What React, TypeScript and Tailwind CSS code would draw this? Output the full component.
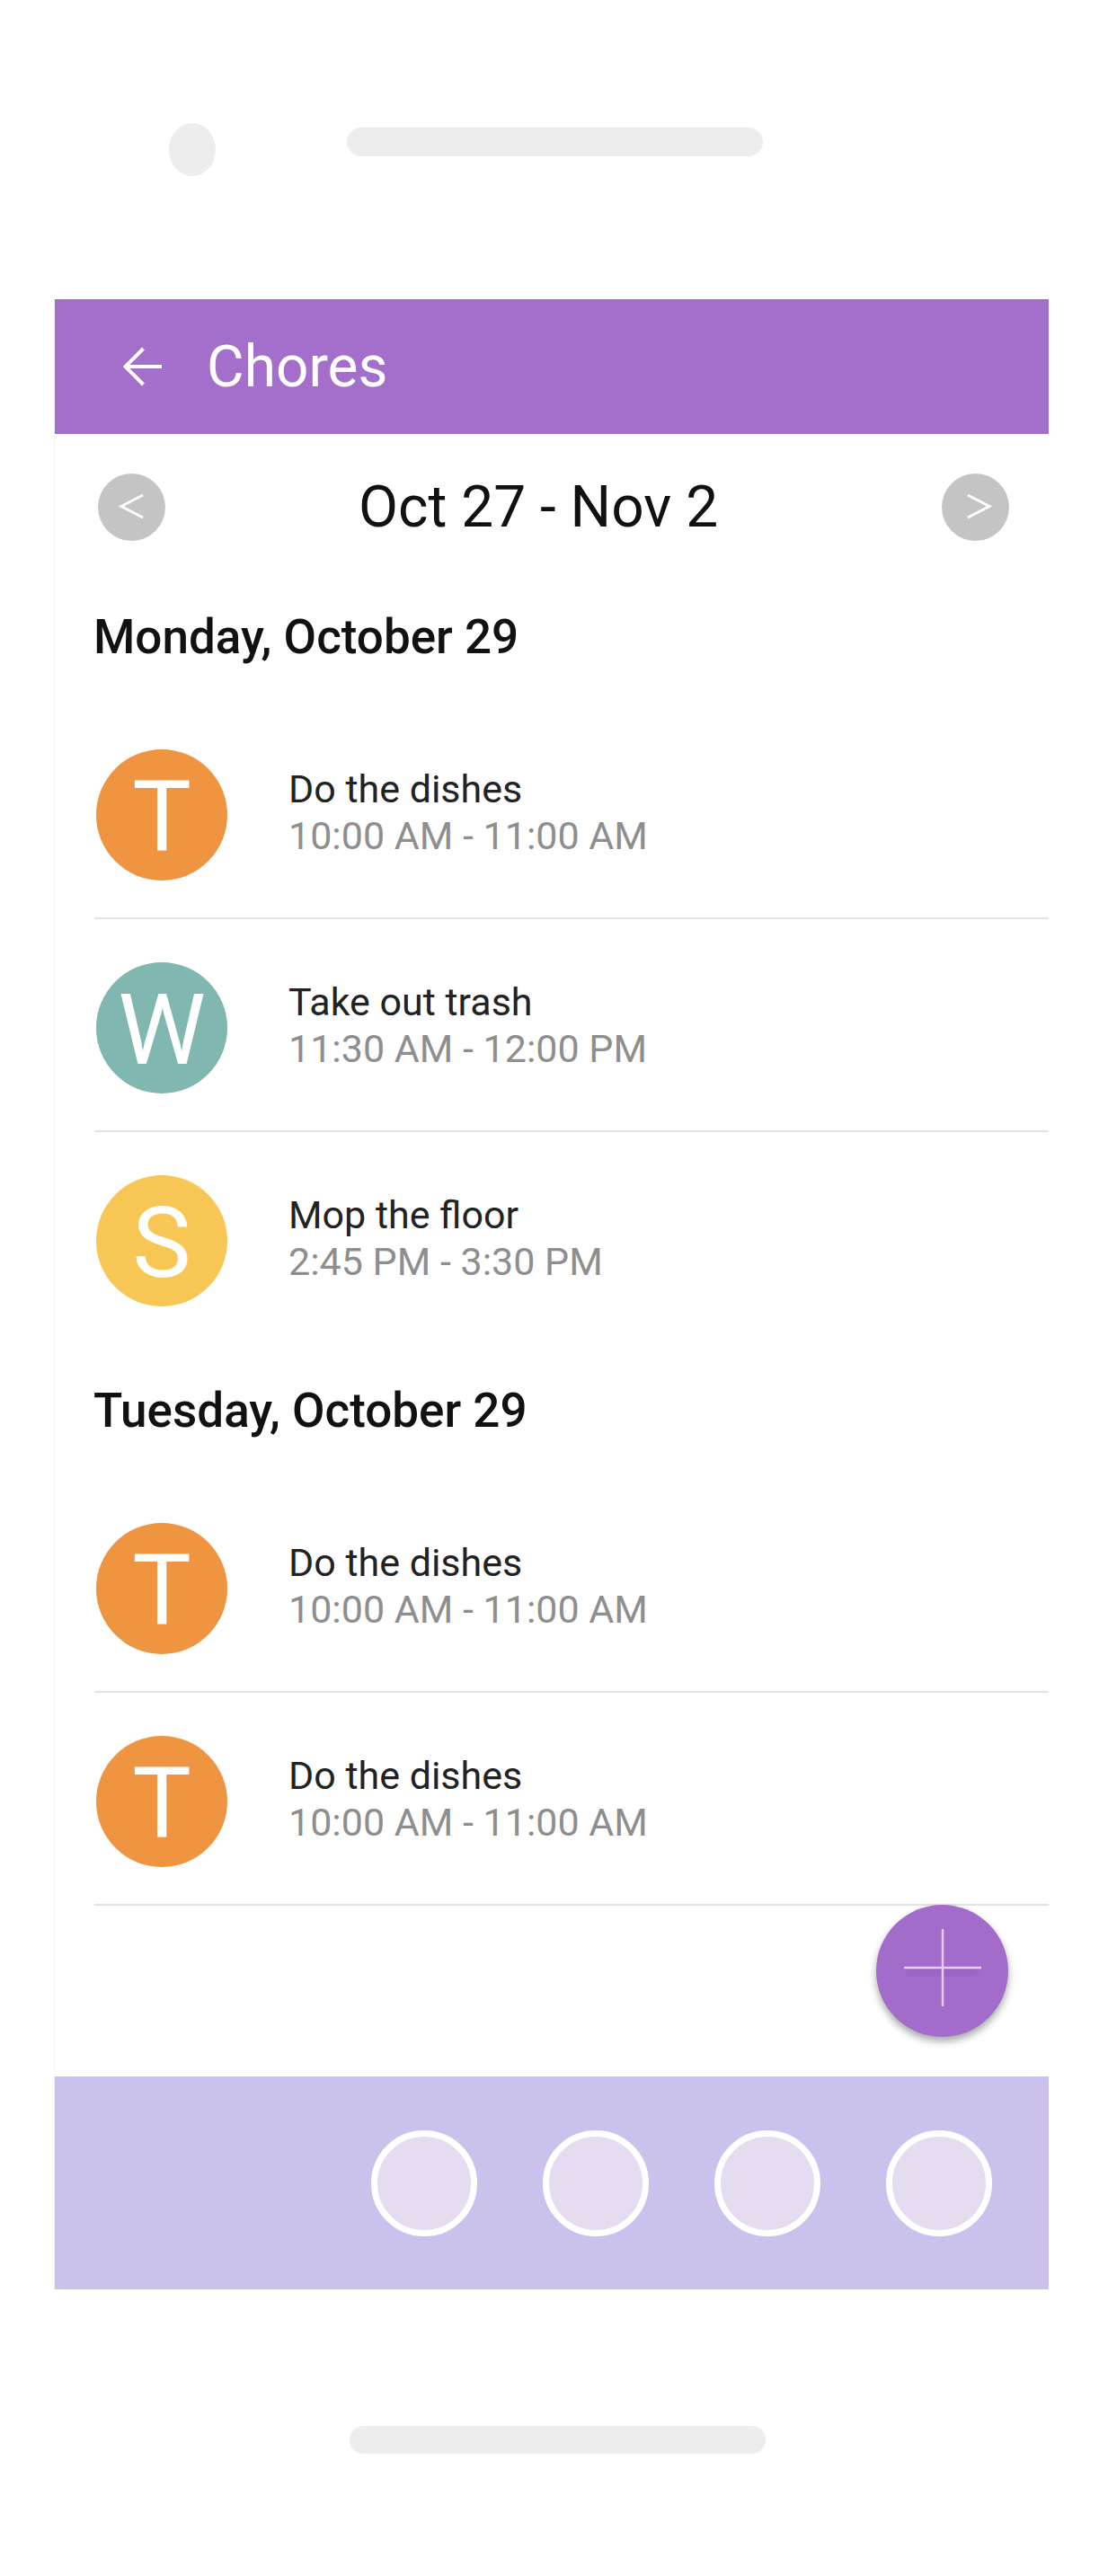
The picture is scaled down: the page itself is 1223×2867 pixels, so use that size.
import React from 'react';

type Chore = {
  letter: string;
  color: string;
  title: string;
  time: string;
  divider: boolean;
};

const days: { label: string; chores: Chore[] }[] = [
  {
    label: 'Monday, October 29',
    chores: [
      { letter: 'T', color: 'bg-[#ef9441]', title: 'Do the dishes', time: '10:00 AM - 11:00 AM', divider: true },
      { letter: 'W', color: 'bg-[#80b7b0]', title: 'Take out trash', time: '11:30 AM - 12:00 PM', divider: true },
      { letter: 'S', color: 'bg-[#f8c655]', title: 'Mop the floor', time: '2:45 PM - 3:30 PM', divider: false },
    ],
  },
  {
    label: 'Tuesday, October 29',
    chores: [
      { letter: 'T', color: 'bg-[#ef9441]', title: 'Do the dishes', time: '10:00 AM - 11:00 AM', divider: true },
      { letter: 'T', color: 'bg-[#ef9441]', title: 'Do the dishes', time: '10:00 AM - 11:00 AM', divider: true },
    ],
  },
];

const NavCircle = ({ dir }: { dir: 'prev' | 'next' }) => (
  <button
    aria-label={dir === 'prev' ? 'Previous week' : 'Next week'}
    className="w-[75px] h-[75px] rounded-full bg-[#c4c4c4] shrink-0 flex items-center justify-center"
  >
    <svg width="75" height="75" viewBox="0 0 75 75" fill="none">
      <polyline
        points={dir === 'prev' ? '50,24 26,36.5 50,49' : '29,24 53,36.5 29,49'}
        stroke="white"
        strokeWidth="3"
        strokeLinejoin="miter"
      />
    </svg>
  </button>
);

const ChoreRow = ({ chore }: { chore: Chore }) => (
  <div
    className={`flex items-center ml-[44px] pl-[2px] pt-[48px] pb-[41px] ${
      chore.divider ? 'border-b-2 border-[#e3e3e3]' : ''
    }`}
  >
    <div
      className={`w-[146px] h-[146px] rounded-full ${chore.color} flex items-center justify-center text-white text-[110px] leading-none shrink-0`}
    >
      <span className="pt-[6px]">{chore.letter}</span>
    </div>
    <div className="ml-[68px] pb-[7px]">
      <p className="text-[43px] leading-[52px] text-[#222222]">{chore.title}</p>
      <p className="text-[43px] leading-[52px] text-[#8e8e8e]">{chore.time}</p>
    </div>
  </div>
);

export default function App() {
  return (
    <div className="min-h-[2867px] bg-white font-['Roboto',sans-serif]">
      {/* phone top: camera + speaker */}
      <div className="h-[333px] flex items-start">
        <div className="ml-[188px] mt-[137px] w-[52px] h-[59px] rounded-[50%] bg-[#ededed]" />
        <div className="ml-[146px] mt-[142px] w-[463px] h-[32px] rounded-full bg-[#ededed]" />
      </div>

      <div className="ml-[61px] w-[1106px] shadow-[-1px_0_0_#f2f2f2]">
        {/* app bar */}
        <header className="h-[150px] bg-[#a36fcb] flex items-center pl-[76px]">
          <svg width="44" height="44" viewBox="0 0 44 44" fill="none">
            <path d="M43 22H3M22.5 2L2.5 22L22.5 42" stroke="white" strokeWidth="4" />
          </svg>
          <h1 className="ml-[49px] text-[64px] leading-[75px] text-white">Chores</h1>
        </header>

        {/* week switcher */}
        <div className="mt-[44px] flex items-center pl-[48px] pr-[44px]">
          <NavCircle dir="prev" />
          <p className="flex-1 text-center pr-[34px] text-[64px] leading-[75px] text-[#111111]">
            Oct 27 - Nov 2
          </p>
          <NavCircle dir="next" />
        </div>

        {days.map((day, i) => (
          <section key={day.label}>
            <h2
              className={`${i === 0 ? 'mt-[77px]' : 'mt-[45px]'} mb-[47px] ml-[43px] text-[53px] leading-[60px] font-medium text-[#111111]`}
            >
              {day.label}
            </h2>
            {day.chores.map((chore, j) => (
              <ChoreRow key={j} chore={chore} />
            ))}
          </section>
        ))}

        {/* add button */}
        <div className="flex justify-end pr-[45px]">
          <button
            aria-label="Add chore"
            className="-mt-[1px] mb-[44px] w-[147px] h-[147px] rounded-full bg-[#a36ccb] shadow-[0_5px_8px_rgba(0,0,0,0.35)] flex items-center justify-center"
          >
            <svg width="90" height="96" viewBox="0 0 90 96" fill="none">
              <defs>
                <filter id="plusShadow" x="-20%" y="-20%" width="140%" height="160%">
                  <feGaussianBlur stdDeviation="3" />
                </filter>
              </defs>
              <rect x="6" y="46" width="78" height="6" fill="#7a4aa0" opacity="0.35" filter="url(#plusShadow)" />
              <line x1="2" y1="44" x2="88" y2="44" stroke="#e4cdf1" strokeWidth="2.5" />
              <line x1="45" y1="1" x2="45" y2="87" stroke="#e4cdf1" strokeWidth="2.5" />
            </svg>
          </button>
        </div>

        {/* bottom nav */}
        <nav className="h-[237px] bg-[#cac2ec] flex items-center justify-end gap-[73px] pr-[63px]">
          {[0, 1, 2, 3].map(n => (
            <div
              key={n}
              className="w-[118px] h-[118px] rounded-full border-[7px] border-white bg-[#e6dcf0]"
            />
          ))}
        </nav>
      </div>

      {/* home indicator */}
      <div className="mt-[152px] ml-[389px] w-[463px] h-[31px] rounded-full bg-[#ededed]" />
    </div>
  );
}
